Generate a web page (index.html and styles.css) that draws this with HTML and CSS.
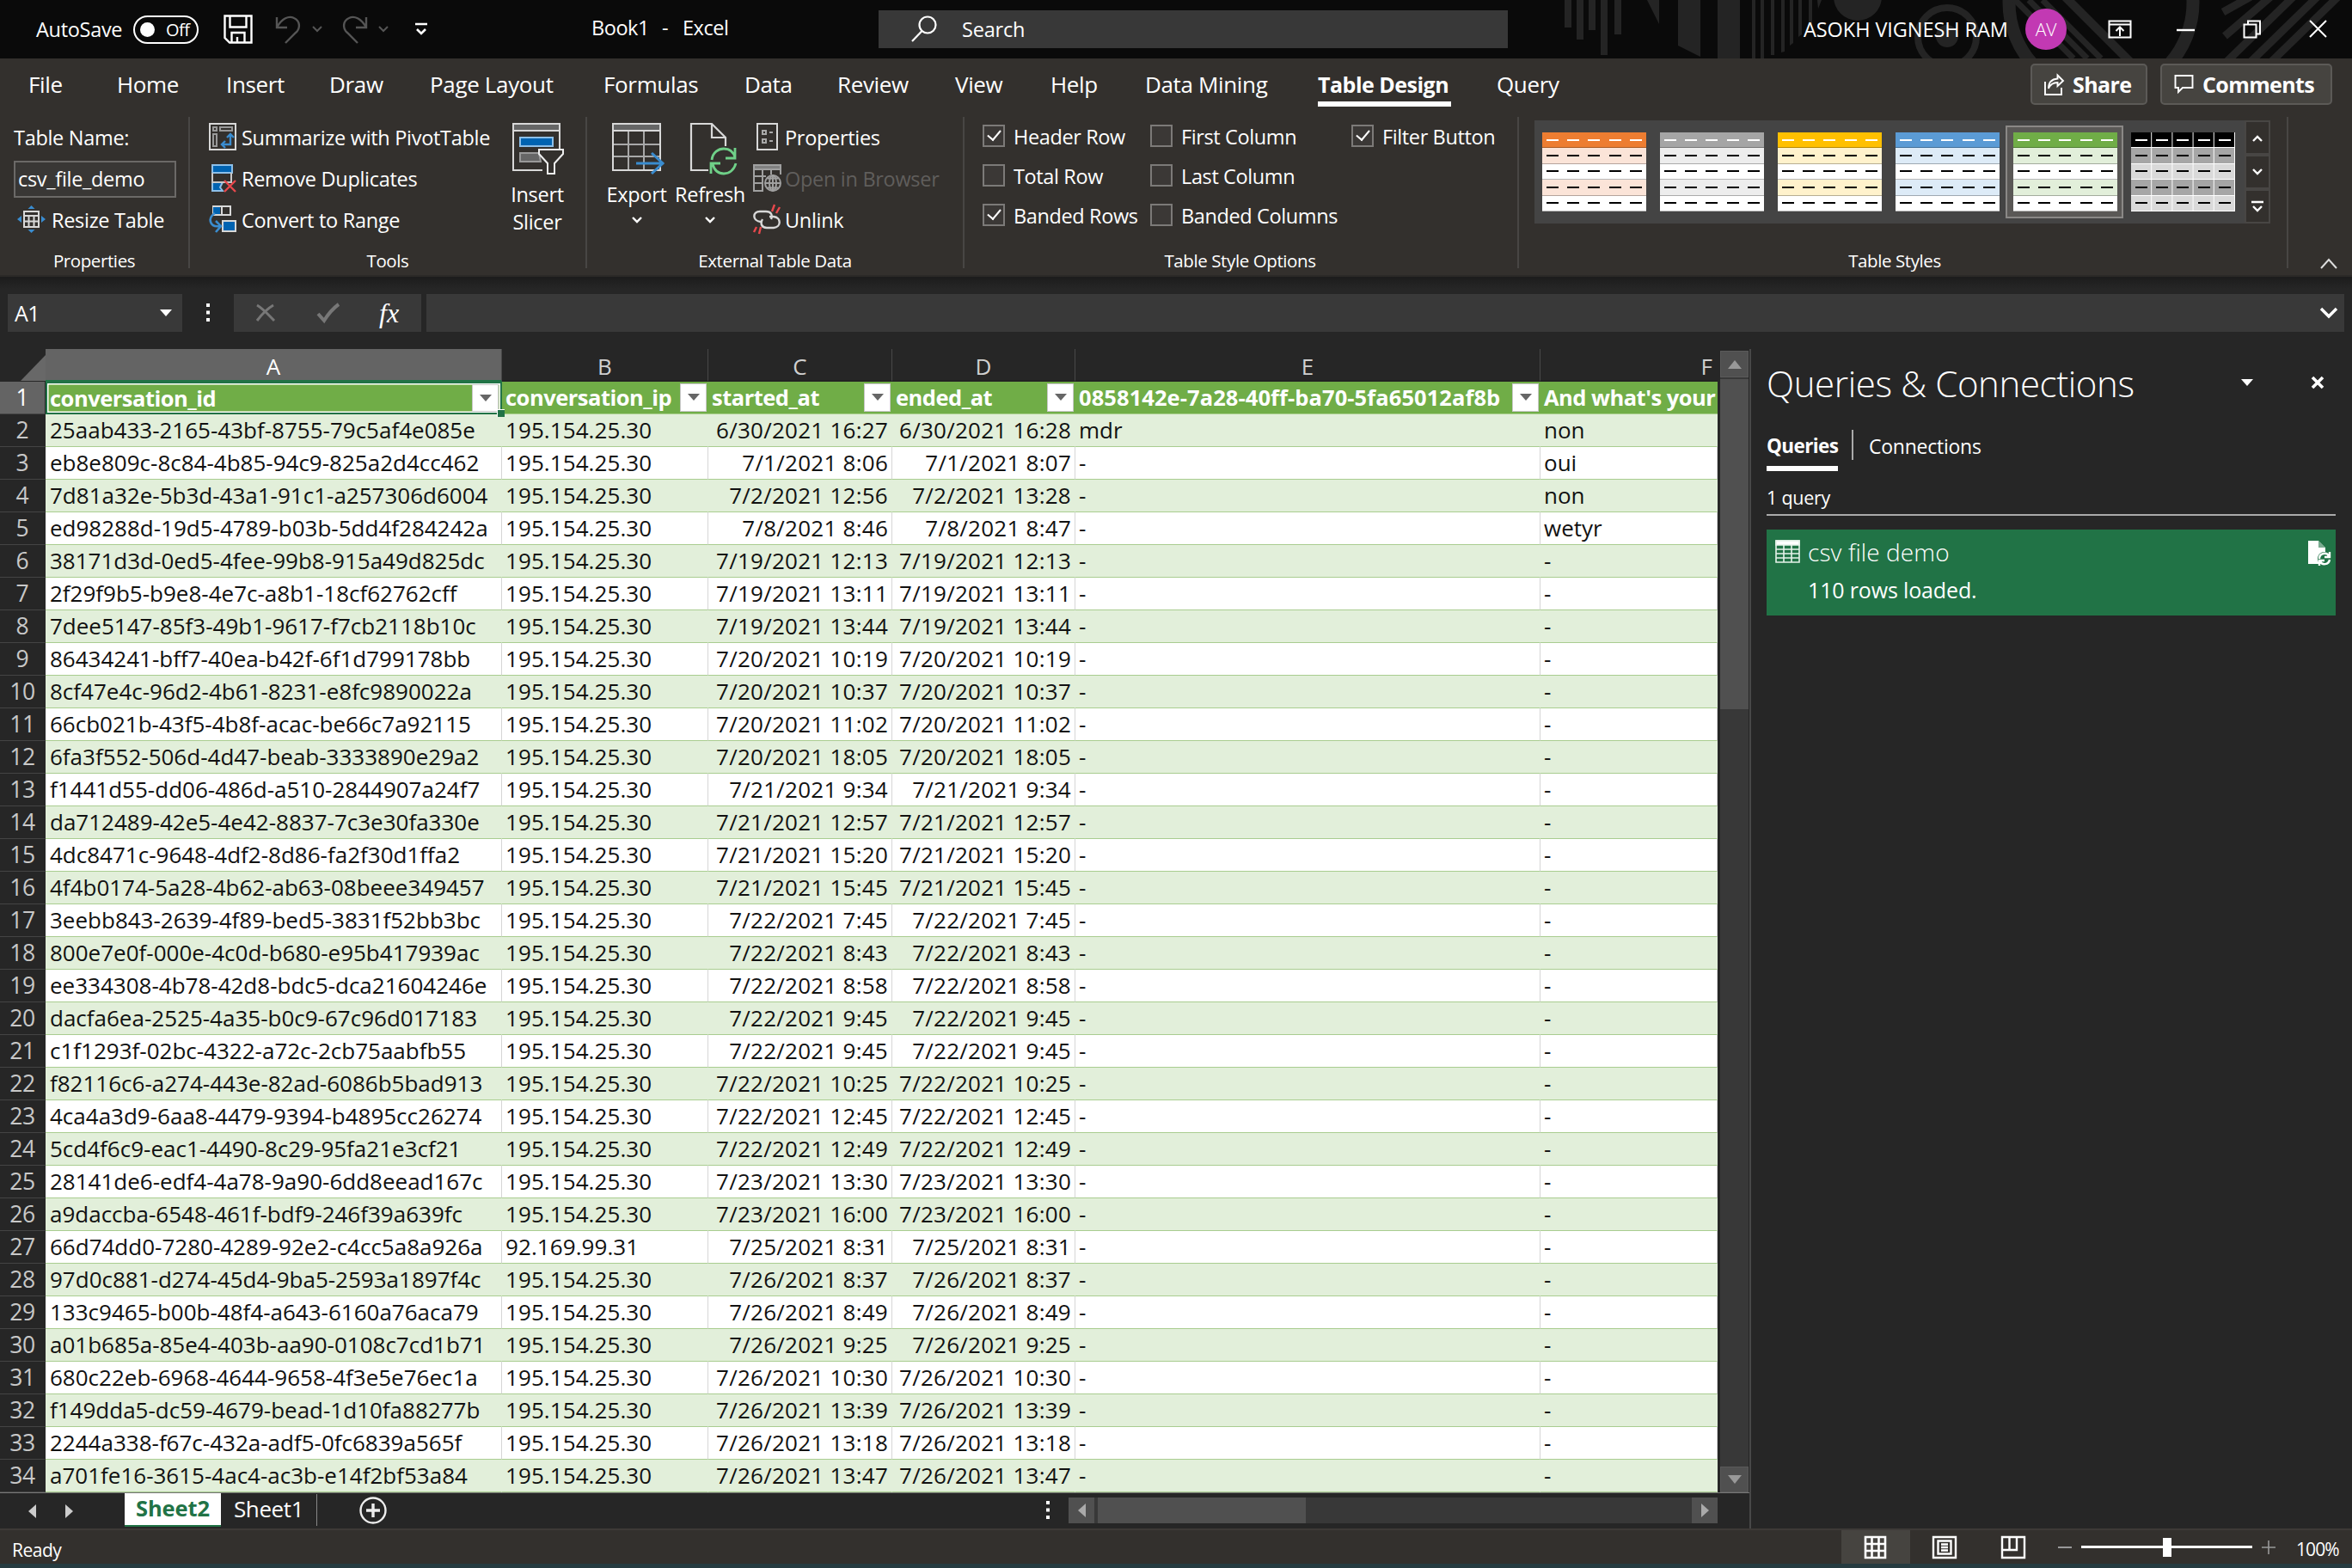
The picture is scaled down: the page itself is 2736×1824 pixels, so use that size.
FILE: index.html
```html
<!DOCTYPE html>
<html lang="en">
<head>
<meta charset="utf-8">
<title>Book1 - Excel</title>
<link rel="stylesheet" href="styles.css">
</head>
<body>
<div class="app">
  <header class="titlebar">
    <svg class="pattern" width="956" height="68" viewBox="0 0 956 68" fill="#242424" stroke="none">
      <path d="M40 0h8v32h-8zM54 0h8v46h-8zM68 0h8v35h-8zM82 0h8v64h-8zM98 0h8v40h-8zM136 0h14v28zM172 0h26v66l-26-13zM218 0h26v68h-26zM258 0h4v68h-4zM268 0h4v68h-4zM280 0h4v64h-4zM292 0h4v60l-4 1zM302 0h4v50l-4 3zM312 0h4v40l-4 3zM324 0h4v28h-4zM334 0h5l-4 10z"/>
      <circle cx="381" cy="-4" r="28"/>
      <circle cx="485" cy="42" r="13"/>
      <g fill="none" stroke="#242424">
        <circle cx="485" cy="43" r="34" stroke-width="8"/>
        <circle cx="664" cy="3" r="107" stroke-width="15"/>
        <path stroke-width="7" d="M564 0l68 68M580 0l68 68M596 0l68 68"/>
        <path stroke-width="10" d="M622 -4l76 76"/>
        <path stroke-width="9" d="M842 -6l-36 20M864 -6l-56 48M890 -6l-80 78M918 -6l-80 78M942 -6l-80 78"/>
      </g>
    </svg>
    <span class="t-auto">AutoSave</span>
    <span class="toggle"><i></i><b>Off</b></span>
    <svg width="34" height="34" viewBox="0 0 34 34" fill="none" stroke="#fff" stroke-width="2.4"><path d="M1.5 1.5h31v31H7l-5.500-5.500zM7.500 1.500v13h19v-13M9.500 32v-11h15v11M16 32v-6"/></svg>
    <svg width="32" height="34" viewBox="0 0 32 34" fill="none" stroke="#555" stroke-width="2.4"><path d="M2 3v12h12M2 15C8 4 16 1 22 4c7 3 8 12 2 17L12 33"/></svg>
    <svg width="14" height="9" viewBox="0 0 14 9" fill="none" stroke="#555" stroke-width="2"><path d="M2 1l5 5 5-5"/></svg>
    <svg width="32" height="34" viewBox="0 0 32 34" fill="none" stroke="#555" stroke-width="2.400"><path d="M28 3v12H16M28 15C22 4 14 1 8 4 1 7 0 16 6 21l12 12"/></svg>
    <svg width="14" height="9" viewBox="0 0 14 9" fill="none" stroke="#555" stroke-width="2"><path d="M2 1l5 5 5-5"/></svg>
    <svg width="18" height="16" viewBox="0 0 18 16" fill="none" stroke="#fff" stroke-width="2.600"><path d="M2 2h14M4 8l5 5 5-5"/></svg>
    <span class="doc"><span>Book1</span><span>-</span><span>Excel</span></span>
    <div class="search">
      <svg width="32" height="34" viewBox="0 0 32 34" fill="none" stroke="#fff" stroke-width="2.200"><circle cx="20" cy="12" r="9.500"/><path d="M13.500 19L2 31"/></svg>
      <span>Search</span>
    </div>
    <span class="user">ASOKH VIGNESH RAM</span>
    <span class="avatar">AV</span>
    <svg width="28" height="22" viewBox="0 0 28 22" fill="none" stroke="#fff" stroke-width="2"><path d="M1.500 1.500h25v19h-25zM1.500 5.500h25M14 19V9M9.500 13L14 8.500l4.500 4.500"/></svg>
    <svg width="22" height="22" viewBox="0 0 22 22" stroke="#fff" stroke-width="2.400"><path d="M0 12h21"/></svg>
    <svg width="22" height="22" viewBox="0 0 22 22" fill="none" stroke="#fff" stroke-width="2"><path d="M1.500 5.500h14v15h-14zM6 5.500v-4h14v15h-4"/></svg>
    <svg width="22" height="22" viewBox="0 0 22 22" stroke="#fff" stroke-width="2"><path d="M1 1l19 19M20 1L1 20"/></svg>
  </header>

  <nav class="tabs">
    <span>File</span><span>Home</span><span>Insert</span><span>Draw</span><span>Page Layout</span><span>Formulas</span><span>Data</span><span>Review</span><span>View</span><span>Help</span><span>Data Mining</span><span class="on">Table Design</span><span>Query</span>
    <div class="actions">
      <button class="share"><svg width="24" height="25" viewBox="0 0 24 25" fill="none" stroke="#fff" stroke-width="1.900"><path d="M1 9v15h19v-8M15.500 1.500L22 8l-6.500 6v-4C10 10 7 12 5 17 5 10 9 6 15.500 5.500z"/></svg>Share</button>
      <button class="comments"><svg width="24" height="24" viewBox="0 0 24 24" fill="none" stroke="#fff" stroke-width="1.900"><path d="M1.500 2h20v14H10l-5 5v-5H1.500z"/></svg>Comments</button>
    </div>
  </nav>

  <section class="ribbon">
    <div class="group g-props">
      <div class="body">
        <span class="item">Table Name:</span>
        <span class="item"><span class="name-input">csv_file_demo</span></span>
        <span class="item resize"><svg width="34" height="32" viewBox="0 0 34 32" fill="none" stroke="#d8d8d8" stroke-width="2"><path d="M9 7h17v18H9zM9 12h17M14.500 12v13M20.500 12v13M9 18.500h17"/><path fill="#3a8ccf" stroke="none" d="M17.500 0l4 4h-8zM17.500 32l4-4h-8zM1 16l5-4v8zM34 16l-5-4v8z"/></svg>Resize Table</span>
      </div>
      <div class="label">Properties</div>
    </div>
    <div class="group g-tools">
      <div class="body">
        <div class="col w-tools">
          <span class="item"><svg width="34" height="34" viewBox="0 0 34 34" fill="none" stroke="#d8d8d8" stroke-width="2"><path d="M2 2h30v30H2z"/><path stroke="#999" d="M6 6h4v4H6zM14 6h14v4H14zM6 14h4v14H6z"/><path stroke="#3a8ccf" stroke-width="2.400" d="M16 26h10V15M22 18l4-4 4 4M20 22l-4 4 4 4"/></svg>Summarize with PivotTable</span>
          <span class="item"><svg width="34" height="34" viewBox="0 0 34 34" fill="none" stroke="#8dbfe8" stroke-width="2"><path fill="#0063b1" d="M5 2h23v9H5zM5 22v10h12l-3-4 3-6z"/><path stroke="#c8c8c8" d="M5 11v11h22V11"/><path stroke="#e8484c" stroke-width="2.400" d="M19 20l13 13M32 20L19 33"/></svg>Remove Duplicates</span>
          <span class="item"><svg width="34" height="34" viewBox="0 0 34 34" fill="none" stroke="#d8d8d8" stroke-width="2"><path d="M6 2h20v10H6z"/><path fill="#0063b1" stroke="none" d="M6 3h8v8H6z"/><path d="M16 2v10"/><path fill="#0063b1" d="M17 19h15v12H17z"/><path stroke="#3a8ccf" stroke-width="2.600" d="M8 10C-1 16 2 27 14 25M9 19l6 6-6 7"/></svg>Convert to Range</span>
        </div>
        <div class="big b-slicer">
          <svg width="62" height="62" viewBox="0 0 62 62" fill="none" stroke="#d8d8d8" stroke-width="2"><path fill="#666" stroke="none" d="M2 2h54v8H2z"/><path d="M36 56H2V2h54v30M2 10h54"/><path fill="#0063b1" stroke="#8dbfe8" d="M10 18h38v10H10z"/><path fill="#666" stroke="#999" d="M34 46H10V36h22z"/><path fill="#33302d" stroke="#eee" d="M32 32h28v5L50 48v12h-8V48L32 37z"/></svg>
          <span>Insert</span><span>Slicer</span>
        </div>
      </div>
      <div class="label">Tools</div>
    </div>
    <div class="group g-ext">
      <div class="body">
        <div class="big b-export">
          <svg width="62" height="62" viewBox="0 0 62 62" fill="none" stroke="#a8a8a8" stroke-width="2"><path fill="#666" stroke="none" d="M2 2h55v8H2z"/><path d="M20 11v45M38 11v45M2 26h55M2 40h55"/><path stroke="#d8d8d8" d="M2 2h55v54H2zM2 10h55"/><path stroke="#3a8ccf" stroke-width="3" d="M29 48h32M47 36l13 12-13 12"/></svg>
          <span>Export</span><svg class="chev" width="14" height="10" viewBox="0 0 14 10" fill="none" stroke="#fff" stroke-width="2.400"><path d="M2 2l5 5 5-5"/></svg>
        </div>
        <div class="big b-refresh">
          <svg width="62" height="62" viewBox="0 0 62 62" fill="none" stroke="#d8d8d8" stroke-width="2.200"><path d="M28 56H8V2h24l16 16v10M32 2v16h16"/><path stroke="#6fd088" stroke-width="2.800" d="M32 44c1-9 8-13 14-13s11 3 13 10M59 30v12H48M60 48c-2 8-8 12-14 12s-11-4-13-11M31 60V48h11"/></svg>
          <span>Refresh</span><svg class="chev" width="14" height="10" viewBox="0 0 14 10" fill="none" stroke="#fff" stroke-width="2.400"><path d="M2 2l5 5 5-5"/></svg>
        </div>
        <div class="col">
          <span class="item"><svg width="34" height="34" viewBox="0 0 34 34" fill="none" stroke="#d8d8d8" stroke-width="2"><path d="M7 2h23v30H7z"/><path stroke="#a8a8a8" d="M13 10h4v4h-4zM13 20h4v4h-4zM21 12h4M21 22h4"/></svg>Properties</span>
          <span class="item dim"><svg width="34" height="34" viewBox="0 0 34 34" fill="none" stroke="#a0a0a0" stroke-width="2"><path fill="#808080" d="M3 2h31v5H3z"/><path d="M3 7v25h11M13 8v24M3 15h14M3 23h11M23 8v5M34 7v6"/><circle cx="25" cy="23" r="9"/><path d="M16 23h18M25 14v18M19 17.500h12M19 28.500h12"/><ellipse cx="25" cy="23" rx="4" ry="9"/></svg>Open in Browser</span>
          <span class="item"><svg width="34" height="34" viewBox="0 0 34 34" fill="none" stroke="#d8d8d8" stroke-width="2.400"><path d="M11 20C1 19 1 8 10 8h7c6 0 8 4 6 9M21 14h5c9 1 9 12 0 13h-8c-6 0-8-5-5-10"/><path stroke="#e8484c" d="M27 0l-3 8M33 3l-4 7M6 26l-3 6M11 26l-2 8"/></svg>Unlink</span>
        </div>
      </div>
      <div class="label">External Table Data</div>
    </div>
    <div class="group g-opts">
      <div class="body checks">
        <label><i class="ck on"></i>Header Row</label><label><i class="ck"></i>First Column</label><label><i class="ck on"></i>Filter Button</label>
        <label><i class="ck"></i>Total Row</label><label><i class="ck"></i>Last Column</label><span></span>
        <label><i class="ck on"></i>Banded Rows</label><label><i class="ck"></i>Banded Columns</label><span></span>
      </div>
      <div class="label">Table Style Options</div>
    </div>
    <div class="group g-styles">
      <div class="gallery">
        <div class="thumbs" id="thumbs"></div>
        <div class="scrollers">
          <b><svg width="14" height="9" viewBox="0 0 14 9" fill="none" stroke="#fff" stroke-width="2.400"><path d="M2 8l5-5 5 5"/></svg></b>
          <b><svg width="14" height="9" viewBox="0 0 14 9" fill="none" stroke="#fff" stroke-width="2.400"><path d="M2 1l5 5 5-5"/></svg></b>
          <b><svg width="16" height="14" viewBox="0 0 16 14" fill="none" stroke="#fff" stroke-width="2.400"><path d="M1 2h14M3 7l5 5 5-5"/></svg></b>
        </div>
      </div>
      <div class="label">Table Styles</div>
    </div>
    <svg class="collapse" width="20" height="13" viewBox="0 0 20 13" fill="none" stroke="#ddd" stroke-width="2"><path d="M1 12l9-10 9 10"/></svg>
  </section>

  <section class="formula">
    <div class="namebox"><span>A1</span><svg width="16" height="9" viewBox="0 0 16 9"><path fill="#fff" d="M1 0h14L8 8z"/></svg></div>
    <svg class="dots" width="6" height="22" viewBox="0 0 6 22" fill="#fff"><path d="M1 0h4v4H1zM1 8.500h4v4H1zM1 17h4v4H1z"/></svg>
    <div class="fbuttons">
      <svg width="24" height="22" viewBox="0 0 24 22" fill="none" stroke="#777" stroke-width="3"><path d="M2 2c7 4 13 11 20 18M21 2C14 6 8 12 2 20"/></svg>
      <svg width="28" height="24" viewBox="0 0 28 24" fill="none" stroke="#777" stroke-width="4"><path d="M2 13l7 8C14 13 19 7 26 2"/></svg>
      <span class="fx">fx</span>
    </div>
    <div class="finput"><svg width="22" height="14" viewBox="0 0 22 14" fill="none" stroke="#fff" stroke-width="3.400"><path d="M2 2l9 9 9-9"/></svg></div>
  </section>

  <main class="work">
    <section class="sheet">
      <div class="gridwrap">
        <div class="grid" id="grid"></div>
        <div class="vscroll">
          <b><svg width="16" height="10" viewBox="0 0 16 10"><path fill="#999" d="M0 10h16L8 0z"/></svg></b>
          <i></i>
          <b class="end"><svg width="16" height="10" viewBox="0 0 16 10"><path fill="#999" d="M0 0h16L8 10z"/></svg></b>
        </div>
      </div>
      <div class="sheetbar">
        <svg width="10" height="18" viewBox="0 0 10 18"><path fill="#ccc" d="M9 1v16L0 9z"/></svg>
        <svg width="10" height="18" viewBox="0 0 10 18"><path fill="#ccc" d="M0 1v16l9-8z"/></svg>
        <span class="s-on">Sheet2</span>
        <span class="s-off">Sheet1</span>
        <svg class="plus" width="34" height="34" viewBox="0 0 34 34" fill="none" stroke="#eee" stroke-width="2.400"><circle cx="17" cy="17" r="14.500"/><path stroke-width="3.400" d="M17 9v16M9 17h16"/></svg>
        <svg class="dots" width="6" height="22" viewBox="0 0 6 22" fill="#fff"><path d="M1 0h4v4H1zM1 8.500h4v4H1zM1 17h4v4H1z"/></svg>
        <div class="hscroll">
          <b><svg width="9" height="16" viewBox="0 0 9 16"><path fill="#aaa" d="M9 0v16L0 8z"/></svg></b>
          <i></i>
          <b class="end"><svg width="9" height="16" viewBox="0 0 9 16"><path fill="#aaa" d="M0 0v16l9-8z"/></svg></b>
        </div>
      </div>
    </section>
    <aside class="pane">
      <div class="pane-head"><h2>Queries &amp; Connections</h2>
        <svg width="14" height="8" viewBox="0 0 14 8"><path fill="#fff" d="M0 0h14L7 8z"/></svg>
        <svg width="16" height="16" viewBox="0 0 16 16" stroke="#fff" stroke-width="3.600"><path d="M2 2l12 12M14 2L2 14"/></svg>
      </div>
      <div class="pane-tabs"><b>Queries</b><i></i><span>Connections</span></div>
      <div class="count">1 query</div>
      <div class="card">
        <svg width="30" height="28" viewBox="0 0 30 28" fill="none" stroke="#e6f3ea" stroke-width="1.600"><path fill="#fff" d="M1 1h27v5H1z"/><path d="M1 1h27v25H1zM1 11h27M1 16h27M1 21h27M10 6v20M19 6v20"/></svg>
        <div class="card-text"><strong>csv file demo</strong><span>110 rows loaded.</span></div>
        <svg width="28" height="30" viewBox="0 0 28 30"><path fill="#fff" d="M1 1h12l8 8v19H1z"/><path fill="#217346" d="M13 1v8h8z" opacity=".6"/><circle cx="20" cy="22" r="8" fill="#217346"/><path fill="none" stroke="#fff" stroke-width="2.400" d="M14 22c0-7 9-8 11-3M26 14v6h-6M26 23c-1 6-9 7-11 2M14 30v-6h6"/></svg>
      </div>
    </aside>
  </main>

  <footer class="status">
    <span class="ready">Ready</span>
    <span class="view on"><svg width="28" height="28" viewBox="0 0 28 28" fill="none" stroke="#fff" stroke-width="2.600"><path d="M2 2h23v24H2zM2 10h23M2 18h23M9.500 2v24M17.500 2v24"/></svg></span>
    <span class="view"><svg width="30" height="28" viewBox="0 0 30 28" fill="none" stroke="#fff" stroke-width="2.400"><path d="M2 2h26v24H2zM7.500 6.500h15v15h-15zM11 10.500h8M11 14h8M11 17.500h8"/></svg></span>
    <span class="view"><svg width="30" height="28" viewBox="0 0 30 28" fill="none" stroke="#fff" stroke-width="2.400"><path d="M2 2h26v24H2zM2 17h17V2M10.500 2v15"/></svg></span>
    <div class="zoomer"><span class="minus"></span><span class="track"><i></i></span><svg width="18" height="18" viewBox="0 0 18 18" stroke="#999" stroke-width="1.600"><path d="M9 1v16M1 9h16"/></svg></div>
    <span class="pct">100%</span>
  </footer>
</div>
<script src="sheet.js"></script>
</body>
</html>
```
FILE: styles.css
```css
* { box-sizing: border-box; }
body { margin: 0; background: #262626; font-family: "Open Sans", "Noto Sans", sans-serif; color: #fff; font-size: 24px; }
svg { display: block; flex: none; overflow: visible; }
.app { width: 2736px; height: 1824px; display: flex; flex-direction: column; overflow: hidden; }

.titlebar { position: relative; flex: none; height: 68px; background: #0a0a0a; padding-left: 42px; display: grid; align-items: center; white-space: nowrap;
  grid-template-columns: 113px 105px 60px 42px 36px 41px 42px 207px 334px 1076px 258px 96px 80px 77px 77px 1fr; }
.pattern { position: absolute; right: 0; top: 0; overflow: hidden; }
.titlebar > :not(.pattern) { position: relative; }
.t-auto { font-size: 23.5px; letter-spacing: -.3px; }
.toggle { width: 76px; height: 33px; border: 2.500px solid #fff; border-radius: 17px; display: flex; align-items: center; gap: 13px; padding-left: 6px; }
.toggle i { width: 17px; height: 17px; border-radius: 50%; background: #fff; }
.toggle b { font-weight: 400; font-size: 20px; letter-spacing: -.5px; }
.doc { display: grid; grid-template-columns: 82px 24px 1fr; font-size: 23.500px; letter-spacing: -.45px; margin-top: -4px; }
.search { width: 732px; height: 44px; background: #383838; display: flex; align-items: center; padding-left: 37px; gap: 28px; font-size: 23.500px; letter-spacing: -.2px; }
.user { font-size: 23.500px; letter-spacing: -.07px; }
.avatar { width: 48px; height: 48px; border-radius: 50%; background: #c239b3; display: flex; align-items: center; justify-content: center; font-size: 21px; font-weight: 300; }

.tabs { flex: none; height: 64px; background: #33302d; padding: 0 23px 0 33px; display: grid; font-size: 26px; letter-spacing: -.35px; line-height: 60px; white-space: nowrap;
  grid-template-columns: 103px 127px 120px 117px 202px 164px 108px 137px 111px 110px 201px 208px 200px 1fr; }
.tabs .on { font-weight: 700; font-size: 25px; letter-spacing: -.5px; width: 155px; height: 56px; border-bottom: 6px solid #fff; }
.actions { display: flex; justify-content: flex-end; gap: 15px; padding-top: 6px; }
.actions button { height: 48px; border: 2px solid #5c5a57; border-radius: 5px; background: #464440; color: #fff; font: 700 25px "Open Sans", sans-serif; letter-spacing: -.6px; display: flex; align-items: center; gap: 9px; padding: 0 0 0 14px; }
.share { width: 136px; }
.comments { width: 200px; }

.ribbon { position: relative; flex: none; height: 190px; background: #33302d; display: flex; border-bottom: 2px solid #2b2927; white-space: nowrap; font-size: 23.500px; letter-spacing: -.3px; }
.group { display: flex; flex-direction: column; margin-top: 4px; height: 176px; border-right: 2px solid #484644; }
.label { margin-top: auto; height: 28px; line-height: 28px; text-align: center; font-size: 20.500px; letter-spacing: -.4px; margin-bottom: -5px; }
.body { height: 144px; display: flex; }
.col { display: flex; flex-direction: column; }
.item { height: 48px; display: flex; align-items: center; gap: 5px; }
.item > svg { margin-top: -2px; }
.dim { color: #605e5c; }
.g-props { width: 221px; padding-left: 16px; }
.g-props .body { flex-direction: column; }
.g-props .label { padding-right: 16px; }
.name-input { width: 189px; height: 43px; border: 2px solid #6b6967; background: #393735; line-height: 39px; padding-left: 3px; }
.resize { gap: 7px; padding-left: 3px; }
.g-tools { width: 462px; padding-left: 21px; }
.g-tools .label { padding-right: 21px; }
.w-tools { width: 334px; }
.big { display: flex; flex-direction: column; align-items: center; padding-top: 6px; line-height: 32px; }
.big > svg:first-child { margin: 0 0 6px 2px; }
.chev { margin-top: 9px; }
.b-slicer { width: 98px; }
.g-ext { width: 439px; }
.g-ext .body { padding-left: 20px; }
.b-export { width: 75px; }
.b-refresh { width: 96px; }
.g-opts { width: 645px; padding-left: 21px; }
.g-opts .label { padding-right: 23px; }
.checks { display: grid; grid-template-columns: 195px 234px 1fr; grid-template-rows: 46px 46px 46px; letter-spacing: -.38px; }
.checks label { display: flex; align-items: center; gap: 10px; }
.ck { width: 26px; height: 26px; margin-top: -3px; border: 2px solid #7c7a78; background: #3b3836; display: flex; align-items: center; justify-content: center; }
.ck.on::after { content: ""; width: 7px; height: 13px; border: solid #fff; border-width: 0 2.500px 2.500px 0; transform: translateY(-2px) rotate(40deg); }
.g-styles { width: 895px; padding-left: 18px; }
.g-styles .label { padding-right: 19px; margin-left: -18px; }
.gallery { width: 856px; height: 120px; margin-top: 4px; background: #444; display: flex; justify-content: space-between; }
.thumbs { display: flex; padding: 6px 0 0; }
.thumb { width: 137px; height: 108px; padding: 6px 7px; border: 2px solid transparent; }
.thumb.sel { border-color: #8a8886; background: #5a5856; }
.swatch { width: 121px; height: 92px; display: grid; grid-template-rows: repeat(5, 1fr); }
.swatch > div { display: grid; grid-template-columns: repeat(5, 1fr); place-items: center; border-bottom: 1px solid rgba(0, 0, 0, .28); }
.swatch i { width: 14px; height: 2px; background: currentColor; }
.ruled .swatch > div { border-bottom: 1px solid #fff; background-image: linear-gradient(90deg, transparent 23px, #fff 23px); background-size: 24.2px 100%; }
.scrollers { width: 30px; border: 2px solid #484644; display: flex; flex-direction: column; gap: 4px; background: #484644; }
.scrollers b { flex: 1; background: #33302d; display: flex; align-items: center; justify-content: center; }
.collapse { position: absolute; right: 17px; bottom: 7px; }

.formula { flex: none; height: 84px; padding: 20px 9px 20px 9px; display: flex; background: linear-gradient(#1c1c1c, #262626 14px); }
.formula > div { background: #393939; height: 44px; display: flex; align-items: center; }
.namebox { width: 203px; justify-content: space-between; padding: 0 11px 0 8px; font-size: 25px; }
.formula .dots { margin: 11px 27px 0; }
.namebox span { letter-spacing: -.5px; }
.fbuttons { width: 218px; padding-left: 25px; gap: 47px; }
.fx { font: italic 32px "Liberation Serif", serif; margin-left: -2px; }
.finput { flex: 1; margin-left: 6px; justify-content: flex-end; padding-right: 7px; }

.work { flex: 1; min-height: 0; display: flex; }
.sheet { width: 2037px; border-right: 2px solid #484848; display: flex; flex-direction: column; }
.gridwrap { height: 1330px; display: flex; gap: 3px; }
.grid { width: 1998px; overflow: hidden; font-size: 26px; color: #111; white-space: nowrap; }
.row { display: grid; grid-template-columns: 53px 531px 240px 214px 213px 541px 206px; height: 38px; line-height: 37px; }
.row > * { padding: 0 4px; border-right: 1.500px solid #d6d6d6; border-bottom: 1.500px solid #a9cd90; background: #fff; overflow: hidden; }
.row.band > * { background: #e2efda; border-right-color: #e2efda; }
.row > .rh { background: #262626; color: #c8c8c8; border-right: 1px solid #262626; border-bottom-color: #444; padding: 0; text-align: center; font-size: 26.500px; letter-spacing: -.3px; }
.row .id { padding-left: 5px; }
.row .ip { letter-spacing: .08px; }
.row .r { text-align: right; letter-spacing: .25px; }
.cols { height: 38px; line-height: 40px; }
.cols > * { background: #262626; color: #d0d0d0; text-align: center; border-right: 1px solid #484848; border-bottom: 2px solid #222; }
.cols .corner { border: 0; }
.cols .corner svg { margin: 6px 0 0 16px; }
.cols .sel { background: #646464; color: #fff; border-bottom: 2px solid #217346; }
.cols .f { text-align: right; padding-right: 6px; border-right: 0; }
.head > * { background: #70ad47; border-color: #a9d08e; border-right: 0; color: #fff; font-weight: 700; display: flex; justify-content: space-between; font-size: 25.500px; letter-spacing: -.5px; padding-right: 2px; }
.head > .rh { display: block; background: #646464; color: #fff; font-weight: 400; }
.head .cell-e { letter-spacing: .08px; }
.head .cell-a { border: 2px solid #217346; box-shadow: inset 0 0 0 1.500px #fff; padding-left: 3px; position: relative; line-height: 34px; overflow: visible; }
.cell-a::after { content: ""; position: absolute; right: -5px; bottom: -5px; width: 8px; height: 8px; background: #217346; border: 1px solid #fff; border-width: 1px 0 0 1px; }
.fb { flex: none; width: 31px; height: 33px; margin-top: 2px; background: #fff; border: 1px solid #c8c8c8; display: flex; align-items: center; justify-content: center; }
.cell-a .fb { margin-top: 1px; height: 32px; }

.vscroll { width: 33px; margin-top: 2px; height: 1328px; background: #383838; display: flex; flex-direction: column; }
.vscroll b, .hscroll b { background: #505050; display: flex; align-items: center; justify-content: center; }
.vscroll b { height: 31px; border: 1px solid #5a5a5a; }
.vscroll i { height: 384px; margin-top: 2px; background: #505050; }
.vscroll .end { margin-top: auto; height: 30px; }

.sheetbar { height: 42px; border-top: 1px solid #777; display: flex; align-items: center; padding-left: 33px; font-size: 26px; }
.sheetbar > svg:first-child { margin-right: 33px; }
.s-on { margin-left: 59px; width: 112px; height: 39px; align-self: flex-start; line-height: 35px; background: #fff; border-bottom: 2px solid #217346; color: #217346; font-weight: 700; font-size: 25.500px; letter-spacing: -.1px; text-align: center; }
.s-off { width: 112px; height: 37px; align-self: flex-start; line-height: 35px; margin-top: 1px; padding-left: 15px; border-right: 1.500px solid #888; letter-spacing: -.4px; }
.plus { margin-left: 48px; margin-top: -2px; }
.sheetbar .dots { margin-left: 765px; margin-top: -1px; }
.hscroll { width: 755px; height: 30px; margin: -1px 0 0 21px; background: #383838; display: flex; }
.hscroll b { width: 30px; }
.hscroll i { width: 242px; margin-left: 4px; background: #505050; }
.hscroll .end { margin-left: auto; }

.pane { flex: 1; padding: 0 19px 0 18px; letter-spacing: -.25px; }
.pane-head { height: 94px; display: flex; align-items: center; padding-right: 13px; }
.pane-head h2 { margin: -16px 0 0; font-weight: 300; font-size: 42px; letter-spacing: -.4px; width: 552px; white-space: nowrap; }
.pane-head svg { margin-top: -17px; }
.pane-head svg:last-child { margin-left: auto; }
.pane-tabs { height: 48px; display: flex; font-size: 23px; line-height: 38px; }
.pane-tabs b { width: 83px; height: 48px; border-bottom: 6px solid #fff; font-size: 22.500px; letter-spacing: -.6px; }
.pane-tabs i { width: 2px; height: 35px; background: #aaa; margin: 0 18px 0 16px; }
.count { height: 52px; border-bottom: 2px solid #aaa; font-size: 21.500px; line-height: 30px; padding-top: 16px; }
.card { margin-top: 16px; height: 100px; background: #217346; display: flex; padding: 12px 5px 0 10px; }
.card-text { flex: 1; margin: -8px 0 0 8px; display: flex; flex-direction: column; line-height: 44px; }
.card strong { font-weight: 300; font-size: 28px; letter-spacing: .1px; }
.card span { font-size: 25px; letter-spacing: -.15px; }

.status { flex: none; height: 46px; background: #33302d; border-top: 2px solid #3d3a37; border-bottom: 5px solid #263b40; display: flex; align-items: center; font-size: 21px; }
.ready { width: 2142px; padding: 7px 0 0 14px; letter-spacing: -.5px; }
.view { width: 80px; height: 39px; display: flex; align-items: center; justify-content: center; }
.view.on { background: #464440; }
.zoomer { margin-left: 12px; display: flex; align-items: center; width: 276px; }
.minus { width: 16px; height: 2px; background: #999; }
.track { width: 199px; height: 3px; margin: 0 10px 0 11px; background: #fff; display: flex; align-items: center; justify-content: center; }
.track i { width: 10px; height: 22px; background: #fff; }
.pct { letter-spacing: -.9px; padding: 4px 0 0 1px; }
```
FILE: sheet.js
```js
// Sheet rows: id, started, ended, optional E and F values
const rows = `25aab433-2165-43bf-8755-79c5af4e085e|6/30/2021 16:27|6/30/2021 16:28|mdr|non
eb8e809c-8c84-4b85-94c9-825a2d4cc462|7/1/2021 8:06|7/1/2021 8:07|-|oui
7d81a32e-5b3d-43a1-91c1-a257306d6004|7/2/2021 12:56|7/2/2021 13:28|-|non
ed98288d-19d5-4789-b03b-5dd4f284242a|7/8/2021 8:46|7/8/2021 8:47|-|wetyr
38171d3d-0ed5-4fee-99b8-915a49d825dc|7/19/2021 12:13
2f29f9b5-b9e8-4e7c-a8b1-18cf62762cff|7/19/2021 13:11
7dee5147-85f3-49b1-9617-f7cb2118b10c|7/19/2021 13:44
86434241-bff7-40ea-b42f-6f1d799178bb|7/20/2021 10:19
8cf47e4c-96d2-4b61-8231-e8fc9890022a|7/20/2021 10:37
66cb021b-43f5-4b8f-acac-be66c7a92115|7/20/2021 11:02
6fa3f552-506d-4d47-beab-3333890e29a2|7/20/2021 18:05
f1441d55-dd06-486d-a510-2844907a24f7|7/21/2021 9:34
da712489-42e5-4e42-8837-7c3e30fa330e|7/21/2021 12:57
4dc8471c-9648-4df2-8d86-fa2f30d1ffa2|7/21/2021 15:20
4f4b0174-5a28-4b62-ab63-08beee349457|7/21/2021 15:45
3eebb843-2639-4f89-bed5-3831f52bb3bc|7/22/2021 7:45
800e7e0f-000e-4c0d-b680-e95b417939ac|7/22/2021 8:43
ee334308-4b78-42d8-bdc5-dca21604246e|7/22/2021 8:58
dacfa6ea-2525-4a35-b0c9-67c96d017183|7/22/2021 9:45
c1f1293f-02bc-4322-a72c-2cb75aabfb55|7/22/2021 9:45
f82116c6-a274-443e-82ad-6086b5bad913|7/22/2021 10:25
4ca4a3d9-6aa8-4479-9394-b4895cc26274|7/22/2021 12:45
5cd4f6c9-eac1-4490-8c29-95fa21e3cf21|7/22/2021 12:49
28141de6-edf4-4a78-9a90-6dd8eead167c|7/23/2021 13:30
a9daccba-6548-461f-bdf9-246f39a639fc|7/23/2021 16:00
66d74dd0-7280-4289-92e2-c4cc5a8a926a|7/25/2021 8:31
97d0c881-d274-45d4-9ba5-2593a1897f4c|7/26/2021 8:37
133c9465-b00b-48f4-a643-6160a76aca79|7/26/2021 8:49
a01b685a-85e4-403b-aa90-0108c7cd1b71|7/26/2021 9:25
680c22eb-6968-4644-9658-4f3e5e76ec1a|7/26/2021 10:30
f149dda5-dc59-4679-bead-1d10fa88277b|7/26/2021 13:39
2244a338-f67c-432a-adf5-0fc6839a565f|7/26/2021 13:18
a701fe16-3615-4ac4-ac3b-e14f2bf53a84|7/26/2021 13:47`.split("\n").map(r => r.split("|"));

const filter = '<span class="fb"><svg width="14" height="9" viewBox="0 0 14 9"><path fill="#666" d="M0 0h14L7 8z"/></svg></span>';
const heads = ["conversation_id", "conversation_ip", "started_at", "ended_at", "0858142e-7a28-40ff-ba70-5fa65012af8b"];

let html = '<div class="row cols"><span class="corner"><svg width="36" height="31" viewBox="0 0 36 31"><path fill="#686868" d="M34 0v31H4z"/></svg></span>' +
  '<span class="sel">A</span><span>B</span><span>C</span><span>D</span><span>E</span><span class="f">F</span></div>';
html += '<div class="row head"><span class="rh">1</span>' +
  heads.map((h, i) => `<span class="cell-${"abcde"[i]}">${h}${filter}</span>`).join("") +
  "<span>And what's your</span></div>";
rows.forEach(([id, start, end = start, e = "-", f = "-"], i) => {
  const n = i + 2;
  const ip = n === 27 ? "92.169.99.31" : "195.154.25.30";
  html += `<div class="row ${n % 2 ? "" : "band"}"><span class="rh">${n}</span><span class="id">${id}</span><span class="ip">${ip}</span>` +
    `<span class="r">${start}</span><span class="r">${end}</span><span>${e}</span><span>${f}</span></div>`;
});
document.getElementById("grid").innerHTML = html;

// Gallery swatches: header, band, alternate band
const styles = [
  ["#ed7d31", "#fbe4d8", "#fff"], ["#a5a5a5", "#ededed", "#fff"], ["#ffc000", "#fff2cc", "#fff"],
  ["#5b9bd5", "#ddebf7", "#fff"], ["#70ad47", "#e2efda", "#fff"], ["#000", "#a6a6a6", "#d9d9d9"]
];
document.getElementById("thumbs").innerHTML = styles.map((s, i) =>
  `<div class="thumb${i === 4 ? " sel" : ""}${i === 5 ? " ruled" : ""}"><div class="swatch">` +
  [0, 1, 2, 1, 2].map((c, r) => `<div style="background-color:${s[c]};color:${r ? "#000" : "#fff"}">${"<i></i>".repeat(5)}</div>`).join("") +
  "</div></div>").join("");
```
